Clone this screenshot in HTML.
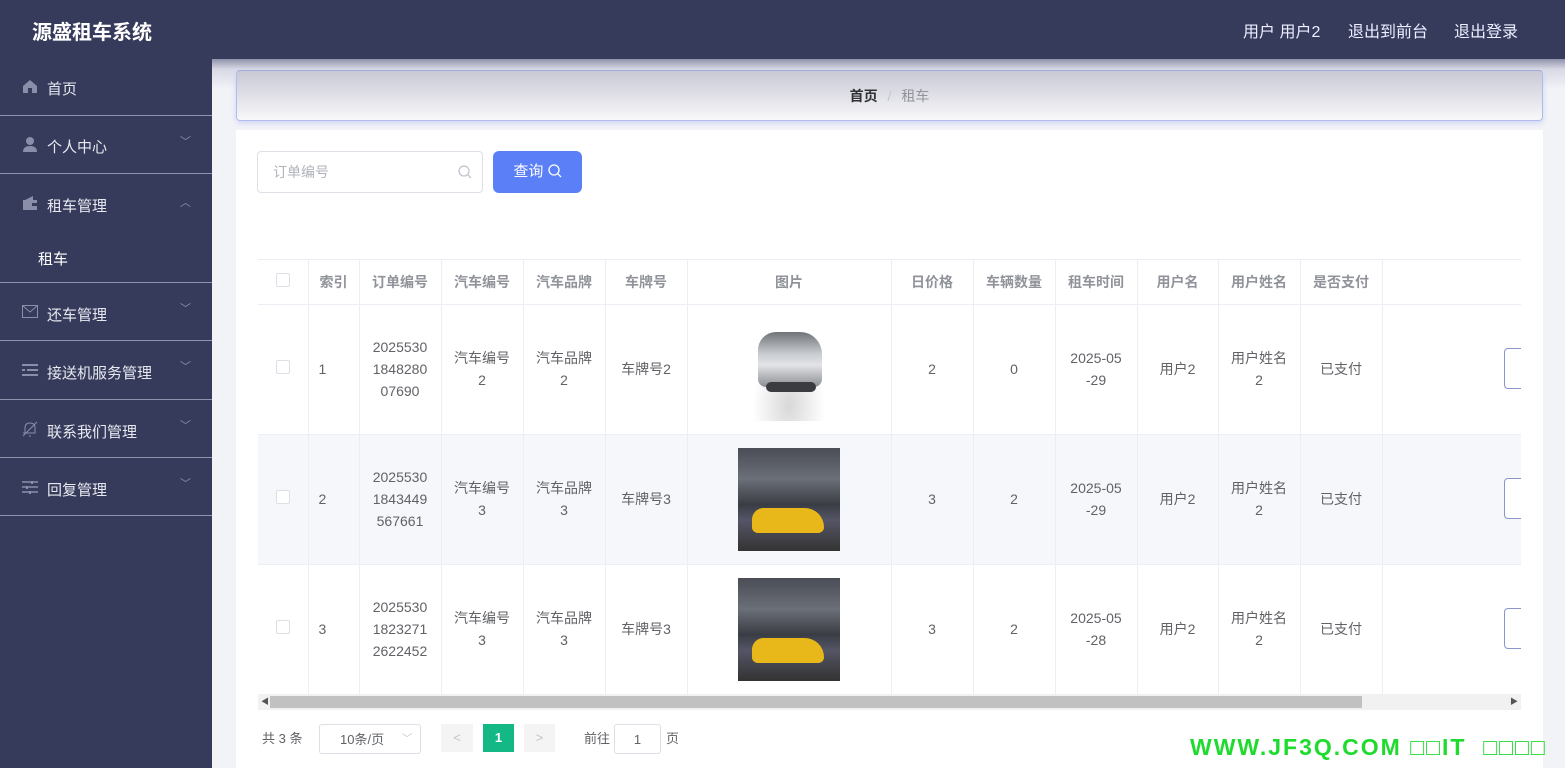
<!DOCTYPE html>
<html><head><meta charset="utf-8"><style>
*{margin:0;padding:0;box-sizing:border-box}
body{width:1565px;height:768px;overflow:hidden;position:relative;background:#f2f3f7;font-family:"Liberation Sans","Noto Sans CJK SC",sans-serif;color:#606266}
.hdr{position:absolute;left:0;top:0;width:1565px;height:59px;background:#363b5c;color:#fff}
.logo{position:absolute;left:32px;top:16px;font-size:20px;font-weight:bold}
.hr{position:absolute;top:18px;font-size:16px;color:#eef}
.side{position:absolute;left:0;top:59px;width:212px;height:709px;background:#363b5c}
.mi{position:absolute;left:0;width:212px;color:#e8e9ef;font-size:15px;border-bottom:1px solid #8f94ad}
.mi .t{position:absolute;left:47px}
.mi .ic{position:absolute;left:22px}
.mi .ar{position:absolute;left:180px;color:#8a8ea8;font-size:11px}
.main{position:absolute;left:212px;top:59px;width:1353px;height:709px;background:linear-gradient(#8f92aa 0,#d7d8e3 10px,#f2f3f7 30px)}
.bc{position:absolute;left:236px;top:70px;width:1307px;height:51px;border-radius:4px;border:1px solid #b2bbee;border-top-color:#a4abd8;background:linear-gradient(#c8c9d4,#f8f8fa);box-shadow:0 2px 6px #cdd3f5;text-align:center;line-height:50px;font-size:14px}
.panel{position:absolute;left:236px;top:130px;width:1307px;height:638px;background:#fff}
.inp{position:absolute;left:257px;top:151px;width:226px;height:42px;border:1px solid #dcdfe6;border-radius:4px;color:#b0b3ba;font-size:14px;line-height:40px;padding-left:15px}
.btn{position:absolute;left:493px;top:151px;width:89px;height:42px;border-radius:6px;background:#5b7ff7;color:#fff;font-size:15px;line-height:42px;text-align:center}
.tw{position:absolute;left:258px;top:259px;width:1263px;height:435px;overflow:hidden;border-top:1px solid #ebeef5}
table{border-collapse:collapse;table-layout:fixed;width:1320px}
td,th{border-right:1px solid #ebeef5;border-bottom:1px solid #ebeef5;text-align:center;font-size:14px;line-height:22px;padding:0 4px}
th{height:44px;color:#909399;font-weight:bold}
td{height:130px;color:#606266}
tr.s td{background:#f5f7fa}
.cb{display:inline-block;width:14px;height:14px;border:1px solid #dcdfe6;border-radius:2px;background:#fff}
.img1{width:102px;height:103px;margin:0 auto;position:relative;background:radial-gradient(ellipse at 50% 85%,#d8d8d8 0,#fff 50%)}
.img1:before{content:"";position:absolute;left:20px;top:14px;width:64px;height:55px;border-radius:18px 22px 8px 8px;background:linear-gradient(#707378,#c9ccd0 40%,#e2e4e6 60%,#8a8d92)}
.img1:after{content:"";position:absolute;left:28px;top:64px;width:50px;height:10px;border-radius:5px;background:#3a3c40}
.img2{width:102px;height:103px;margin:0 auto;background:linear-gradient(#4a4d55 0,#6b6f78 30%,#3a3d44 55%,#556 70%,#333 100%);position:relative}
.img2:after{content:"";position:absolute;left:14px;top:60px;width:72px;height:25px;border-radius:12px 20px 6px 6px;background:#e8b81a}
.ob{position:absolute;left:1504px;width:30px;height:41px;border:1px solid #8a95c9;border-radius:4px;background:#fff}
.sb{position:absolute;left:258px;top:694px;width:1263px;height:16px;background:#f1f1f1}
.sb i{position:absolute;left:12px;top:2px;width:1092px;height:12px;background:#c1c1c1}
.pg{position:absolute;top:724px;font-size:13px;color:#606266;line-height:30px}
.wm{position:absolute;left:1190px;top:734px;color:#1edb2e;font-size:23px;font-weight:bold;letter-spacing:2px;white-space:nowrap}
</style></head><body>
<div class="hdr"><div class="logo">源盛租车系统</div>
<div class="hr" style="left:1243px">用户 用户2</div><div class="hr" style="left:1348px">退出到前台</div><div class="hr" style="left:1454px">退出登录</div></div>
<div class="side">
<div class="mi" style="top:0;height:57px"><span class="ic" style="top:20px"><svg width="16" height="14"><path d="M1 7L8 1L15 7V14H10V9H6V14H1Z" fill="#8a8ea8"/></svg></span><span class="t" style="top:19px">首页</span></div>
<div class="mi" style="top:57px;height:58px"><span class="ic" style="top:20px"><svg width="16" height="16"><circle cx="8" cy="5" r="4" fill="#8a8ea8"/><path d="M1 16Q1 10 8 10Q15 10 15 16Z" fill="#8a8ea8"/></svg></span><span class="t" style="top:20px">个人中心</span><span class="ar" style="top:17px">﹀</span></div>
<div class="mi" style="top:115px;height:109px"><span class="ic" style="top:22px"><svg width="16" height="14"><path d="M1 4H15V14H1Z M3 4L11 0V4" fill="#8a8ea8"/><rect x="10" y="7" width="5" height="3" fill="#363b5c"/></svg></span><span class="t" style="top:21px">租车管理</span><span class="ar" style="top:20px">︿</span><span style="position:absolute;left:38px;top:74px;color:#fff">租车</span></div>
<div class="mi" style="top:224px;height:58px"><span class="ic" style="top:22px"><svg width="16" height="13"><rect x="0.5" y="0.5" width="15" height="12" fill="none" stroke="#8a8ea8"/><path d="M1 1L8 7L15 1" fill="none" stroke="#8a8ea8"/></svg></span><span class="t" style="top:21px">还车管理</span><span class="ar" style="top:17px">﹀</span></div>
<div class="mi" style="top:282px;height:59px"><span class="ic" style="top:23px"><svg width="16" height="13"><path d="M0 1H16M5 6H16M0 6H3M0 11H16" stroke="#8a8ea8" stroke-width="2"/></svg></span><span class="t" style="top:21px">接送机服务管理</span><span class="ar" style="top:17px">﹀</span></div>
<div class="mi" style="top:341px;height:58px"><span class="ic" style="top:21px"><svg width="16" height="16"><path d="M3 12V7Q3 2 8 2Q13 2 13 7V12H1M15 1L1 15M7 15H9" fill="none" stroke="#8a8ea8"/></svg></span><span class="t" style="top:21px">联系我们管理</span><span class="ar" style="top:17px">﹀</span></div>
<div class="mi" style="top:399px;height:58px"><span class="ic" style="top:23px"><svg width="16" height="13"><path d="M0 1H16M0 6H16M0 11H16" stroke="#8a8ea8" stroke-width="1.5"/><path d="M10 0V3M5 5V8M8 10V13" stroke="#8a8ea8" stroke-width="2"/></svg></span><span class="t" style="top:21px">回复管理</span><span class="ar" style="top:17px">﹀</span></div>
</div>
<div class="main"></div>
<div class="panel"></div>
<div class="bc"><b style="color:#303133">首页</b> <span style="color:#c0c4cc;margin:0 6px">/</span> <span style="color:#909399">租车</span></div>
<div class="inp">订单编号<svg style="position:absolute;left:200px;top:13px" width="14" height="14"><circle cx="6" cy="6" r="5" fill="none" stroke="#c0c4cc" stroke-width="1.3"/><path d="M10 10L13 13" stroke="#c0c4cc" stroke-width="1.3"/></svg></div>
<div class="btn">查询 <svg width="14" height="14" style="vertical-align:-2px"><circle cx="6" cy="6" r="5" fill="none" stroke="#fff" stroke-width="1.3"/><path d="M10 10L13 13" stroke="#fff" stroke-width="1.3"/></svg></div>
<div class="tw"><table>
<colgroup><col style="width:50px"><col style="width:51px"><col style="width:82px"><col style="width:82px"><col style="width:82px"><col style="width:82px"><col style="width:204px"><col style="width:82px"><col style="width:82px"><col style="width:82px"><col style="width:81px"><col style="width:82px"><col style="width:82px"><col style="width:197px"></colgroup>
<tr><th><span class="cb"></span></th><th>索引</th><th>订单编号</th><th>汽车编号</th><th>汽车品牌</th><th>车牌号</th><th>图片</th><th>日价格</th><th>车辆数量</th><th>租车时间</th><th>用户名</th><th>用户姓名</th><th>是否支付</th><th></th></tr>
<tr><td><span class="cb"></span></td><td style="text-align:left;padding-left:10px">1</td><td>2025530<br>1848280<br>07690</td><td>汽车编号<br>2</td><td>汽车品牌<br>2</td><td>车牌号2</td><td><div class="img1"></div></td><td>2</td><td>0</td><td>2025-05<br>-29</td><td>用户2</td><td>用户姓名<br>2</td><td>已支付</td><td></td></tr>
<tr class="s"><td><span class="cb"></span></td><td style="text-align:left;padding-left:10px">2</td><td>2025530<br>1843449<br>567661</td><td>汽车编号<br>3</td><td>汽车品牌<br>3</td><td>车牌号3</td><td><div class="img2"></div></td><td>3</td><td>2</td><td>2025-05<br>-29</td><td>用户2</td><td>用户姓名<br>2</td><td>已支付</td><td></td></tr>
<tr><td><span class="cb"></span></td><td style="text-align:left;padding-left:10px">3</td><td>2025530<br>1823271<br>2622452</td><td>汽车编号<br>3</td><td>汽车品牌<br>3</td><td>车牌号3</td><td><div class="img2"></div></td><td>3</td><td>2</td><td>2025-05<br>-28</td><td>用户2</td><td>用户姓名<br>2</td><td>已支付</td><td></td></tr>
</table>
<div class="ob" style="left:1246px;top:88px"></div><div class="ob" style="left:1246px;top:218px"></div><div class="ob" style="left:1246px;top:348px"></div>
</div>
<div class="sb"><i></i><span style="position:absolute;left:3px;top:2px;font-size:8px;color:#555">◀</span><span style="position:absolute;right:3px;top:2px;font-size:8px;color:#555">▶</span></div>
<div class="pg" style="left:262px">共 3 条</div>
<div class="pg" style="left:319px;width:102px;height:30px;border:1px solid #dcdfe6;border-radius:3px;padding-left:20px">10条/页<span style="position:absolute;left:82px;color:#c0c4cc;font-size:10px">﹀</span></div>
<div class="pg" style="left:441px;width:32px;height:28px;background:#f4f4f5;text-align:center;color:#c0c4cc;line-height:28px">&lt;</div>
<div class="pg" style="left:483px;width:31px;height:28px;background:#14b884;text-align:center;color:#fff;font-weight:bold;line-height:28px">1</div>
<div class="pg" style="left:524px;width:31px;height:28px;background:#f4f4f5;text-align:center;color:#c0c4cc;line-height:28px">&gt;</div>
<div class="pg" style="left:584px">前往</div>
<div class="pg" style="left:614px;width:47px;height:30px;border:1px solid #dcdfe6;border-radius:3px;text-align:center">1</div>
<div class="pg" style="left:666px">页</div>
<div class="wm">WWW.JF3Q.COM □□IT &nbsp;□□□□</div>
</body></html>
